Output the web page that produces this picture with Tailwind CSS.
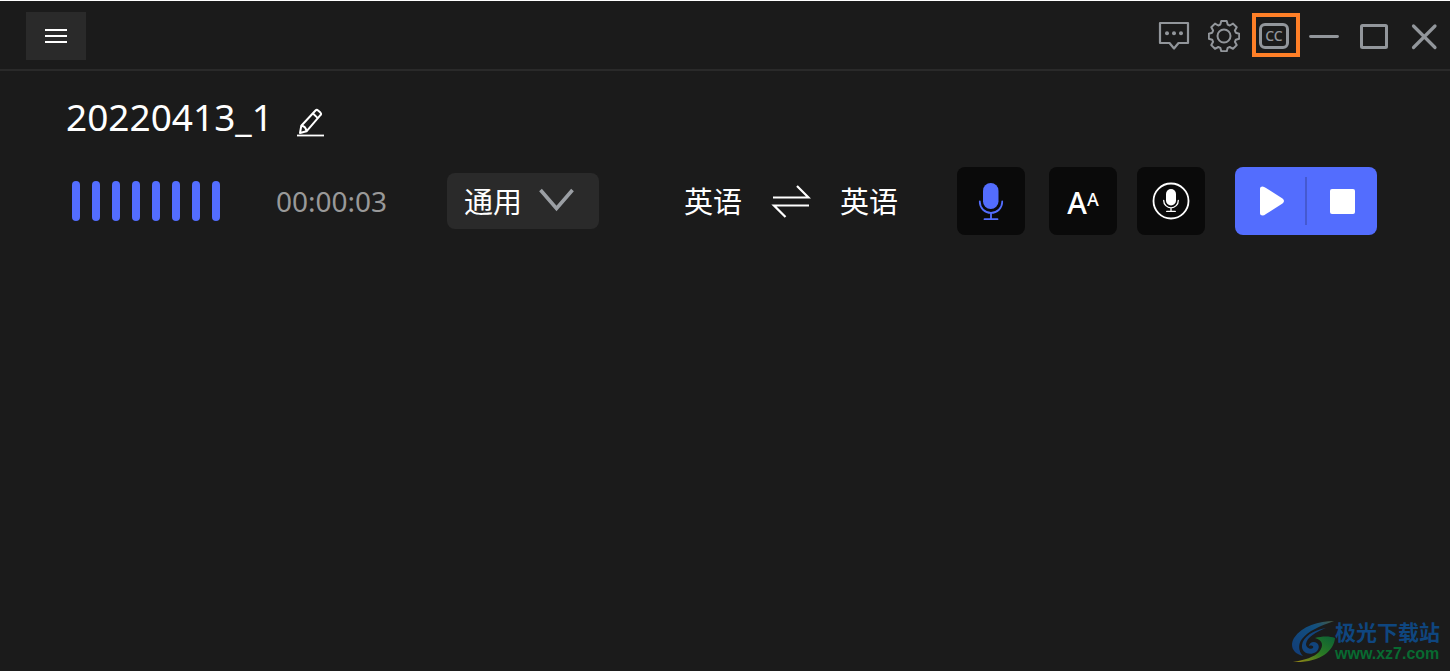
<!DOCTYPE html>
<html lang="zh-CN">
<head>
    <meta charset="UTF-8">
    <meta name="viewport" content="width=device-width, initial-scale=1.0">
    <title>20220413_1</title>
    <script src="https://cdn.jsdelivr.net/npm/@tailwindcss/browser@4"></script>
    <style>
        body { font-family: 'Noto Sans', 'Noto Sans CJK SC', sans-serif; }
    </style>
</head>
<body class="relative flex flex-col min-h-screen bg-[#1b1b1b] text-white">

<!-- title bar -->
<header class="flex items-center justify-between h-[71px] pt-0.5 pl-[26px] pr-px border-t border-t-white border-b-2 border-b-[#2a2a2a]">
    <button type="button" aria-label="菜单" class="flex items-center justify-center w-[60px] h-12 bg-[#2a2a2a]">
        <svg class="w-[22px] h-4" viewBox="0 0 22 16" stroke="#fff" stroke-width="2"><path d="M0 2h22M0 8h22M0 14h22"/></svg>
    </button>
    <div class="flex items-center">
        <button type="button" aria-label="反馈" class="flex items-center justify-center w-[50px] h-[46px]">
            <svg class="w-8 h-8" viewBox="0 0 32 32" fill="none" stroke="#92969b" stroke-width="2.200">
                <path d="M2 3h28v20h-9.500l-4.500 5.500-4.500-5.500H2z" stroke-linejoin="round"/>
                <g fill="#92969b" stroke="none"><circle cx="9" cy="13.200" r="2"/><circle cx="16" cy="13.200" r="2"/><circle cx="23" cy="13.200" r="2"/></g>
            </svg>
        </button>
        <button type="button" aria-label="设置" class="flex items-center justify-center w-[50px] h-[46px]">
            <svg class="w-8 h-8" viewBox="0 0 32 32" fill="none" stroke="#92969b" stroke-width="2" stroke-linejoin="round">
                <path d="M13.300 1h5.400l1 3.600 2 .9 3.300-1.900 3.700 3.700-1.800 3.300.9 2.100 3.400 1v5l-3.400 1-.9 2.100 1.800 3.300-3.700 3.700-3.300-1.800-2 .9-1 3.400h-5.400l-1-3.400-2-.9L7 28.800l-3.700-3.700 1.800-3.300-.9-2.100-3.400-1v-5l3.400-1 .9-2.100-1.800-3.300L7 3.600l3.300 1.900 2-.9z"/>
                <circle cx="16" cy="16" r="6.500"/>
            </svg>
        </button>
        <button type="button" aria-label="字幕" class="relative flex items-center justify-center w-[50px] h-[46px]">
            <span class="flex items-center justify-center w-[30px] h-[26px] rounded-md border-3 border-[#92969b] text-sm leading-none font-medium text-[#92969b]">CC</span>
            <span class="absolute top-0 left-[3px] w-12 h-11 border-4 border-[#ff7f27]"></span>
        </button>
        <button type="button" aria-label="最小化" class="flex items-center justify-center w-[50px] h-[46px]">
            <svg class="w-8 h-8" viewBox="0 0 32 32" stroke="#92969b" stroke-width="2.800"><path d="M2.500 16.500h27" stroke-linecap="round"/></svg>
        </button>
        <button type="button" aria-label="最大化" class="flex items-center justify-center w-[50px] h-[46px]">
            <svg class="w-8 h-8" viewBox="0 0 32 32" fill="none" stroke="#92969b" stroke-width="3"><rect x="3.500" y="5.500" width="25" height="22" rx="1"/></svg>
        </button>
        <button type="button" aria-label="关闭" class="flex items-center justify-center w-[50px] h-[46px]">
            <svg class="w-8 h-8" viewBox="0 0 32 32" stroke="#92969b" stroke-width="3.200" stroke-linecap="round"><path d="M5.500 6l21.500 21.500M27 6L5.500 27.500"/></svg>
        </button>
    </div>
</header>

<main class="pl-[66px] pr-[73px] pt-[18px]">
    <div class="flex items-center gap-[22px] h-14">
        <h1 class="text-[37px] leading-[56px]">20220413_1</h1>
        <button type="button" aria-label="重命名" class="pt-3">
            <svg class="w-8 h-8" viewBox="0 0 32 32" fill="none" stroke="#fff" stroke-width="2" stroke-linejoin="round">
                <path d="M5 26l1.300-7.300L20.500 3.500c.8-.8 1.800-.8 2.600 0l2.300 2.100c.8.8.8 1.800 0 2.600L11.500 24.300z"/>
                <path d="M18 6.500l4.800 4.600M6.300 18.700c2.500.2 4.700 2.300 5.200 5.600"/>
                <path d="M2 28.500h27" stroke-width="1.800"/>
            </svg>
        </button>
    </div>

    <div class="flex items-center mt-[22px]">
        <div class="flex gap-3 pl-1.5">
            <span class="w-2 h-10 rounded-full bg-[#536dfe]"></span>
            <span class="w-2 h-10 rounded-full bg-[#536dfe]"></span>
            <span class="w-2 h-10 rounded-full bg-[#536dfe]"></span>
            <span class="w-2 h-10 rounded-full bg-[#536dfe]"></span>
            <span class="w-2 h-10 rounded-full bg-[#536dfe]"></span>
            <span class="w-2 h-10 rounded-full bg-[#536dfe]"></span>
            <span class="w-2 h-10 rounded-full bg-[#536dfe]"></span>
            <span class="w-2 h-10 rounded-full bg-[#536dfe]"></span>
        </div>
        <time class="w-[171px] ml-14 text-[28px] leading-10 text-[#999]">00:00:03</time>

        <div class="relative">
            <select aria-label="领域" class="appearance-none w-[152px] h-14 pt-0.5 pl-[17px] rounded-lg bg-[#2a2a2a] text-[29px] leading-10">
                <option>通用</option>
            </select>
            <svg class="absolute top-[11px] right-[25px] w-9 h-8 pointer-events-none" viewBox="0 0 36 32" fill="none" stroke="#9b9fa4" stroke-width="3.600"><path d="M2.500 6l16 18.500L34.500 6"/></svg>
        </div>

        <div class="flex items-center gap-[29px] ml-auto text-[29px] leading-10">
            <button type="button" class="pt-0.5">英语</button>
            <button type="button" aria-label="交换语言">
                <svg class="w-10 h-10" viewBox="0 0 40 40" fill="none" stroke="#fff" stroke-width="2.200"><path d="M2 16.500h35.500L26 5M38 24.500H3L14.500 36"/></svg>
            </button>
            <button type="button" class="pt-0.5">英语</button>
        </div>

        <button type="button" aria-label="麦克风" class="flex items-center justify-center size-[68px] ml-[59px] rounded-lg bg-[#0a0a0a]">
            <svg class="w-10 h-10" viewBox="0 0 40 40" fill="none" stroke="#536dfe" stroke-width="1.800" stroke-linecap="round">
                <rect x="12" y="2" width="15.500" height="26" rx="7.700" fill="#536dfe" stroke="none"/>
                <path d="M8.800 20.500v.6a11.200 10.800 0 0 0 22.400 0v-.6M20 32v6M13.500 38.200h13"/>
            </svg>
        </button>
        <button type="button" aria-label="字号" class="flex items-start justify-center size-[68px] ml-6 pt-5 rounded-lg bg-[#0a0a0a] font-medium">
            <span class="text-[30px] leading-8">A</span>
            <span class="text-lg leading-6">A</span>
        </button>
        <button type="button" aria-label="录音" class="flex items-center justify-center size-[68px] ml-5 rounded-lg bg-[#0a0a0a]">
            <svg class="w-10 h-10" viewBox="0 0 40 40" fill="none" stroke="#fff" stroke-width="1.300" stroke-linecap="round">
                <circle cx="20" cy="20" r="17.500" stroke-width="1.800"/>
                <rect x="15" y="8" width="10" height="16.500" rx="5" fill="#fff" stroke="none"/>
                <path d="M12.700 19.500a7.300 7.300 0 0 0 14.600 0M20 26.800v3.600M15.700 30.400h8.600"/>
            </svg>
        </button>

        <div class="flex items-center h-[68px] ml-[30px] rounded-lg bg-[#536dfe]">
            <button type="button" aria-label="播放" class="flex items-center justify-center w-[70px] h-full">
                <svg class="w-8 h-8" viewBox="0 0 32 32" fill="#fff"><path d="M6 3.500Q6 1.500 8.500 1.500Q10 1.500 12 3L28.500 13.500Q31.500 16 28.500 18.500L12 29Q10 30.500 8.500 30.500Q6 30.500 6 28.500z"/></svg>
            </button>
            <span class="w-0.5 h-12 bg-[#4559d0]"></span>
            <button type="button" aria-label="停止" class="flex items-center justify-center w-[70px] h-full">
                <span class="size-[25px] rounded-xs bg-white"></span>
            </button>
        </div>
    </div>
</main>

<!-- site mark -->
<a href="#" class="absolute right-2.5 bottom-[7px] flex items-center">
    <svg class="w-11 h-11" viewBox="0 0 44 44">
        <defs>
            <linearGradient id="blue" x1="1" y1="0" x2="0" y2="1"><stop offset="0" stop-color="#4a5a40"/><stop offset=".3" stop-color="#12507f"/><stop offset="1" stop-color="#123c78"/></linearGradient>
            <linearGradient id="green" x1="1" y1="0" x2="0" y2="1"><stop offset="0" stop-color="#0b5f36"/><stop offset=".5" stop-color="#2a7a24"/><stop offset="1" stop-color="#a08a14"/></linearGradient>
        </defs>
        <path d="M43 1C28 1 11 6 3 18c-5 9 0 16 9 18-5-5-5-12-1-17C17 11 29 6 43 1z" fill="url(#blue)"/>
        <path d="M35 8C22 10 12 17 11 25c-1 8 8 11 14 7 4-3 4-9-2-10-3 0-5 2-5 4 3-1 5 0 4 2-2 2-7 0-7-4 1-7 10-12 20-16z" fill="#12447c"/>
        <path d="M24 18c7-2 15-2 20 0-1 13-15 25-42 24 12-2 21-5 26-10 5-6 4-12-4-14z" fill="url(#green)"/>
    </svg>
    <span class="flex flex-col">
        <span class="text-[21px] leading-6 font-bold text-[#0f467f]">极光下载站</span>
        <span class="font-['Liberation_Sans'] text-base leading-5 font-bold text-[#086a31]">www.xz7.com</span>
    </span>
</a>

</body>
</html>
